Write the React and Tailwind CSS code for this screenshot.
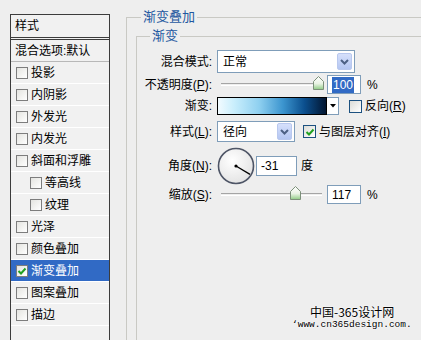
const FONT = "font-['Liberation_Sans','Noto_Sans_CJK_SC',sans-serif]"

const layers = [
  { label: '投影' },
  { label: '内阴影' },
  { label: '外发光' },
  { label: '内发光' },
  { label: '斜面和浮雕' },
  { label: '等高线', sub: true },
  { label: '纹理', sub: true },
  { label: '光泽' },
  { label: '颜色叠加' },
  { label: '渐变叠加', checked: true, active: true },
  { label: '图案叠加' },
  { label: '描边' },
]

function Check() {
  return (
    <svg width="10" height="10" viewBox="0 0 10 10" className="block">
      <path d="M1.5 5 L4 7.5 L8.5 2.5" fill="none" stroke="#21a121" strokeWidth="2" />
    </svg>
  )
}

function SideBox({ checked }) {
  return (
    <span className="w-[12px] h-[12px] shrink-0 border border-[#7d7d7d] bg-gradient-to-br from-[#e4e4e0] to-white flex items-center justify-center">
      {checked && <Check />}
    </span>
  )
}

function XpBox({ checked }) {
  return (
    <span className="w-[13px] h-[13px] shrink-0 border border-[#1c5180] bg-gradient-to-br from-[#dcdcd7] to-white flex items-center justify-center">
      {checked && <Check />}
    </span>
  )
}

function DropButton() {
  return (
    <span className="w-[15px] h-[17px] rounded-[2px] border border-[#b9c8ee] bg-gradient-to-b from-[#d6e0fb] to-[#b4c6f2] flex items-center justify-center">
      <svg width="9" height="6" viewBox="0 0 9 6">
        <path d="M1 1 L4.5 4.5 L8 1" fill="none" stroke="#4d6185" strokeWidth="2" />
      </svg>
    </span>
  )
}

function Select({ value, className }) {
  return (
    <div className={`${className} border border-[#7f9db9] bg-white flex items-center justify-between pl-[5px] pr-[2px]`}>
      <span className="text-[12px] leading-none">{value}</span>
      <DropButton />
    </div>
  )
}

function Thumb() {
  return (
    <svg width="11" height="14" viewBox="0 0 11 14">
      <defs>
        <linearGradient id="thumbFill" x1="0" y1="0" x2="0" y2="1">
          <stop offset="0" stopColor="#ffffff" />
          <stop offset="0.55" stopColor="#e9f3e4" />
          <stop offset="1" stopColor="#8fcc84" />
        </linearGradient>
      </defs>
      <path d="M0.5 5.5 L5.5 0.5 L10.5 5.5 L10.5 13.5 L0.5 13.5 Z" fill="url(#thumbFill)" stroke="#7c907a" />
    </svg>
  )
}

function Slider({ at }) {
  return (
    <div className="relative w-[105px] h-full">
      <div className="absolute left-[4px] right-0 top-[8px] h-[3px] border-t border-[#a5a5a5] border-b border-b-white" />
      <div className="absolute top-[1px]" style={{ left: at - 5 }}>
        <Thumb />
      </div>
    </div>
  )
}

function Field({ children, className }) {
  return (
    <div className={`${className} border border-[#7f9db9] bg-white flex items-center pl-[4px] text-[12px] leading-none`}>
      {children}
    </div>
  )
}

function Label({ children }) {
  return <span className="w-[75px] shrink-0 text-right text-[12px] leading-none text-black">{children}</span>
}

function Dial() {
  return (
    <svg width="38" height="38" viewBox="0 0 38 38">
      <defs>
        <radialGradient id="dialFill" cx="0.4" cy="0.35" r="0.7">
          <stop offset="0" stopColor="#ffffff" />
          <stop offset="1" stopColor="#e2e2e2" />
        </radialGradient>
      </defs>
      <circle cx="19" cy="19" r="17.5" fill="url(#dialFill)" stroke="#4e5566" strokeWidth="1.6" />
      <line x1="19" y1="19" x2="33" y2="27.4" stroke="#000" strokeWidth="1.3" />
      <circle cx="19" cy="19" r="1.6" fill="#000" />
    </svg>
  )
}

export default function App() {
  return (
    <div className={`${FONT} relative w-[421px] h-[340px] overflow-hidden bg-[#eeeeee] flex text-black`}>
      {/* style list */}
      <div className="ml-[10px] mt-[14px] w-[100px] h-[340px] shrink-0 border border-[#3c3c3c] bg-[#f1f1f1] flex flex-col">
        <div className="h-[25px] border-b-[3px] border-double border-[#3c3c3c] flex items-center pl-[4px] text-[12px]">样式</div>
        <div className="h-[22px] border-b border-[#b8b8b8] flex items-center pl-[4px] text-[12px]">混合选项:默认</div>
        {layers.map((l) => (
          <div
            key={l.label}
            className={`h-[22px] border-b border-white flex items-center gap-[3px] text-[12px] ${l.sub ? 'pl-[19px]' : 'pl-[5px]'} ${l.active ? 'bg-[#316ac5] text-white' : ''}`}
          >
            <SideBox checked={l.checked} />
            <span className="leading-none">{l.label}</span>
          </div>
        ))}
      </div>

      {/* settings */}
      <fieldset className="ml-[16px] mt-[9px] w-[330px] h-[360px] shrink-0 border border-[#c9c9c4]">
        <legend className="ml-[14px] px-[2px] text-[13px] leading-[16px] text-[#1f58a0]">渐变叠加</legend>
        <fieldset className="ml-[9px] mt-[3px] w-[320px] h-[320px] border border-[#c9c9c4]">
          <legend className="ml-[13px] px-[2px] text-[13px] leading-[16px] text-[#1f58a0]">渐变</legend>
          <div className="pt-[6px] flex flex-col">
            <div className="h-[23px] flex items-center">
              <Label>混合模式:</Label>
              <Select value="正常" className="ml-[5px] w-[138px] h-[23px]" />
            </div>

            <div className="mt-[2px] h-[19px] flex items-center">
              <Label>不透明度(<u>P</u>):</Label>
              <div className="ml-[5px] h-[19px]"><Slider at={101} /></div>
              <Field className="ml-[5px] w-[34px] h-[19px]">
                <span className="bg-[#316ac5] text-white px-[1px] py-[2px]">100</span>
              </Field>
              <span className="ml-[6px] text-[12px] leading-none">%</span>
            </div>

            <div className="mt-[3px] h-[18px] flex items-center">
              <Label>渐变:</Label>
              <div className="ml-[5px] w-[110px] h-[18px] border border-black bg-[linear-gradient(to_right,#f2fbff_0%,#c9eefc_15%,#8fd0f0_38%,#3c95cf_60%,#0b4f8e_80%,#021530_100%)]" />
              <div className="w-[12px] h-[18px] border border-l-0 border-[#7f9db9] bg-white flex items-center justify-center">
                <svg width="6" height="4" viewBox="0 0 6 4"><path d="M0 0 L6 0 L3 3.5 Z" fill="#000" /></svg>
              </div>
              <span className="ml-[10px]"><XpBox /></span>
              <span className="ml-[3px] text-[12px] leading-none">反向(<u>R</u>)</span>
            </div>

            <div className="mt-[6px] h-[21px] flex items-center">
              <Label>样式(<u>L</u>):</Label>
              <Select value="径向" className="ml-[5px] w-[78px] h-[21px]" />
              <span className="ml-[8px]"><XpBox checked /></span>
              <span className="ml-[3px] text-[12px] leading-none">与图层对齐(<u>I</u>)</span>
            </div>

            <div className="mt-[5px] h-[38px] flex items-center">
              <Label>角度(<u>N</u>):</Label>
              <div className="ml-[5px]"><Dial /></div>
              <Field className="ml-[1px] w-[41px] h-[20px]">-31</Field>
              <span className="ml-[4px] text-[12px] leading-none">度</span>
            </div>

            <div className="h-[19px] flex items-center">
              <Label>缩放(<u>S</u>):</Label>
              <div className="ml-[5px] h-[19px]"><Slider at={78} /></div>
              <Field className="ml-[5px] w-[34px] h-[19px]">117</Field>
              <span className="ml-[6px] text-[12px] leading-none">%</span>
            </div>
          </div>
        </fieldset>
      </fieldset>

      {/* watermark */}
      <div className="absolute left-[310px] top-[305px] text-[12px] leading-[14px] font-['Noto_Sans_CJK_SC',sans-serif] [text-shadow:0_0_2px_#fff,0_0_2px_#fff]">
        中国-365设计网
      </div>
      <div className="absolute left-[292px] top-[319px] text-[9.5px] leading-[12px] font-['Liberation_Mono',monospace] [text-shadow:0_0_2px_#fff,0_0_2px_#fff]">
        ‘www.cn365design.com.
      </div>
    </div>
  )
}
